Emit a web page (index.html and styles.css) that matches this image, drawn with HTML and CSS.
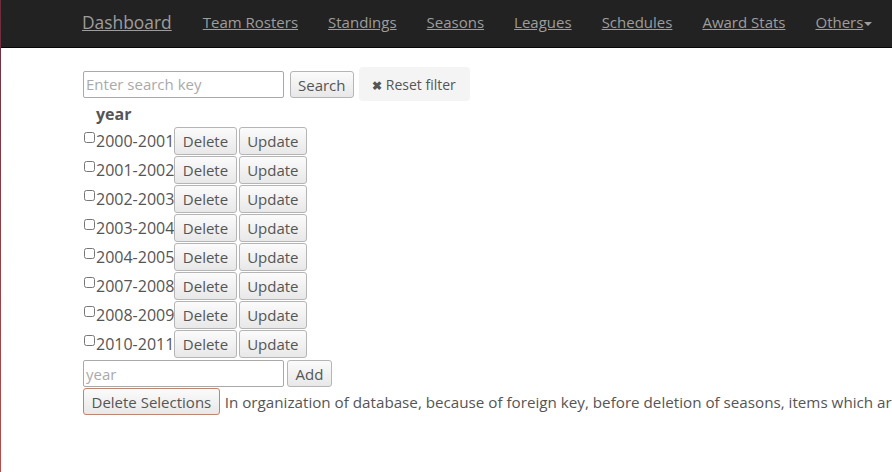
FILE: index.html
```html
<!DOCTYPE html>
<html>
<head>
<meta charset="utf-8">
<link rel="stylesheet" href="styles.css">
</head>
<body>
<div class="page">
  <nav class="navbar">
    <a class="brand" href="#">Dashboard</a>
    <a class="nav-link" href="#">Team Rosters</a>
    <a class="nav-link" href="#">Standings</a>
    <a class="nav-link" href="#">Seasons</a>
    <a class="nav-link" href="#">Leagues</a>
    <a class="nav-link" href="#">Schedules</a>
    <a class="nav-link" href="#">Award Stats</a>
    <a class="nav-link" href="#">Others<span class="caret"></span></a>
  </nav>
  <main class="content">
    <div class="search-row">
      <input class="text-input" type="text" placeholder="Enter search key">
      <button class="btn">Search</button>
      <button class="btn-reset"><span class="x">&#10006;</span> Reset filter</button>
    </div>
    <div class="col-head">year</div>
    <div class="row"><input class="cb" type="checkbox"><span class="label">2000-2001</span><button class="btn">Delete</button><button class="btn">Update</button></div>
    <div class="row"><input class="cb" type="checkbox"><span class="label">2001-2002</span><button class="btn">Delete</button><button class="btn">Update</button></div>
    <div class="row"><input class="cb" type="checkbox"><span class="label">2002-2003</span><button class="btn">Delete</button><button class="btn">Update</button></div>
    <div class="row"><input class="cb" type="checkbox"><span class="label">2003-2004</span><button class="btn">Delete</button><button class="btn">Update</button></div>
    <div class="row"><input class="cb" type="checkbox"><span class="label">2004-2005</span><button class="btn">Delete</button><button class="btn">Update</button></div>
    <div class="row"><input class="cb" type="checkbox"><span class="label">2007-2008</span><button class="btn">Delete</button><button class="btn">Update</button></div>
    <div class="row"><input class="cb" type="checkbox"><span class="label">2008-2009</span><button class="btn">Delete</button><button class="btn">Update</button></div>
    <div class="row"><input class="cb" type="checkbox"><span class="label">2010-2011</span><button class="btn">Delete</button><button class="btn">Update</button></div>
    <div class="add-row">
      <input class="text-input" type="text" placeholder="year">
      <button class="btn">Add</button>
    </div>
    <div class="bottom-row">
      <button class="btn btn-danger">Delete Selections</button>
      <span class="note">In organization of database, because of foreign key, before deletion of seasons, items which are related to the seasons must be deleted first.</span>
    </div>
  </main>
</div>
</body>
</html>
```

FILE: styles.css
```css
html, body {
  margin: 0;
  padding: 0;
  overflow: hidden;
}
body {
  font-family: "Open Sans", "Noto Sans", sans-serif;
  color: #555;
  background: #fff;
}
.page {
  min-height: 100vh;
  border-left: 1px solid #8a3a44;
  border-image: linear-gradient(#6e2c3e, #b84c4a) 1;
  box-sizing: border-box;
}
.navbar {
  height: 47px;
  background: #222;
  border-bottom: 1px solid #080808;
  display: flex;
  align-items: center;
  padding-left: 81px;
  white-space: nowrap;
}
.navbar a {
  color: #9d9d9d;
  text-decoration: underline;
}
.brand {
  font-size: 17.4px;
  margin-right: 31px;
  margin-top: -3px;
}
.nav-link {
  font-size: 15px;
  margin-right: 30px;
  margin-top: -3px;
}
.caret {
  display: inline-block;
  width: 0;
  height: 0;
  border-left: 4px solid transparent;
  border-right: 4px solid transparent;
  border-top: 4px solid #9d9d9d;
  vertical-align: middle;
  margin-left: 1px;
}
.content {
  padding: 19px 0 0 82px;
  font-size: 15px;
}
.search-row {
  display: flex;
  align-items: center;
}
.text-input {
  width: 201px;
  height: 27px;
  box-sizing: border-box;
  border: 1px solid #a9a9a9;
  border-radius: 2px;
  font-family: inherit;
  font-size: 15px;
  padding: 0 2px;
  color: #555;
}
.text-input::placeholder {
  color: #aaa;
}
.btn {
  font-family: inherit;
  font-size: 15px;
  color: #555;
  height: 28px;
  padding: 0 7.5px;
  border: 1px solid #b5b5b5;
  border-radius: 3px;
  background: linear-gradient(#fbfbfb, #e8e8e8);
  line-height: 26px;
}
.search-row .btn {
  margin-left: 6px;
  height: 27px;
  padding: 0 7px;
}
.btn-reset {
  margin-left: 5px;
  height: 34px;
  width: 111px;
  border: none;
  border-radius: 4px;
  background: #f4f4f4;
  font-family: inherit;
  font-size: 14px;
  color: #555;
  padding: 0;
}
.btn-reset .x {
  font-size: 12px;
  font-weight: bold;
}
.col-head {
  font-weight: bold;
  font-size: 16px;
  padding-left: 13px;
  height: 25px;
  line-height: 27px;
}
.row {
  display: flex;
  align-items: center;
  height: 29px;
}
.cb {
  margin: 0 1px 0 1px;
  width: 11px;
  height: 11px;
  position: relative;
  top: -3px;
}
.label {
  font-size: 16px;
  margin-right: 0;
}
.row .btn + .btn {
  margin-left: 2px;
}
.row .btn {
  height: 28px;
}
.add-row {
  display: flex;
  align-items: center;
  margin-top: 1px;
  height: 29px;
}
.add-row .btn {
  margin-left: 3px;
  height: 27px;
}
.bottom-row {
  display: flex;
  align-items: center;
  white-space: nowrap;
}
.bottom-row .btn-danger {
  border-color: #e8764f;
  height: 27px;
  padding: 0 7.5px;
}
.note {
  margin-left: 5px;
  font-size: 15.2px;
}
```
